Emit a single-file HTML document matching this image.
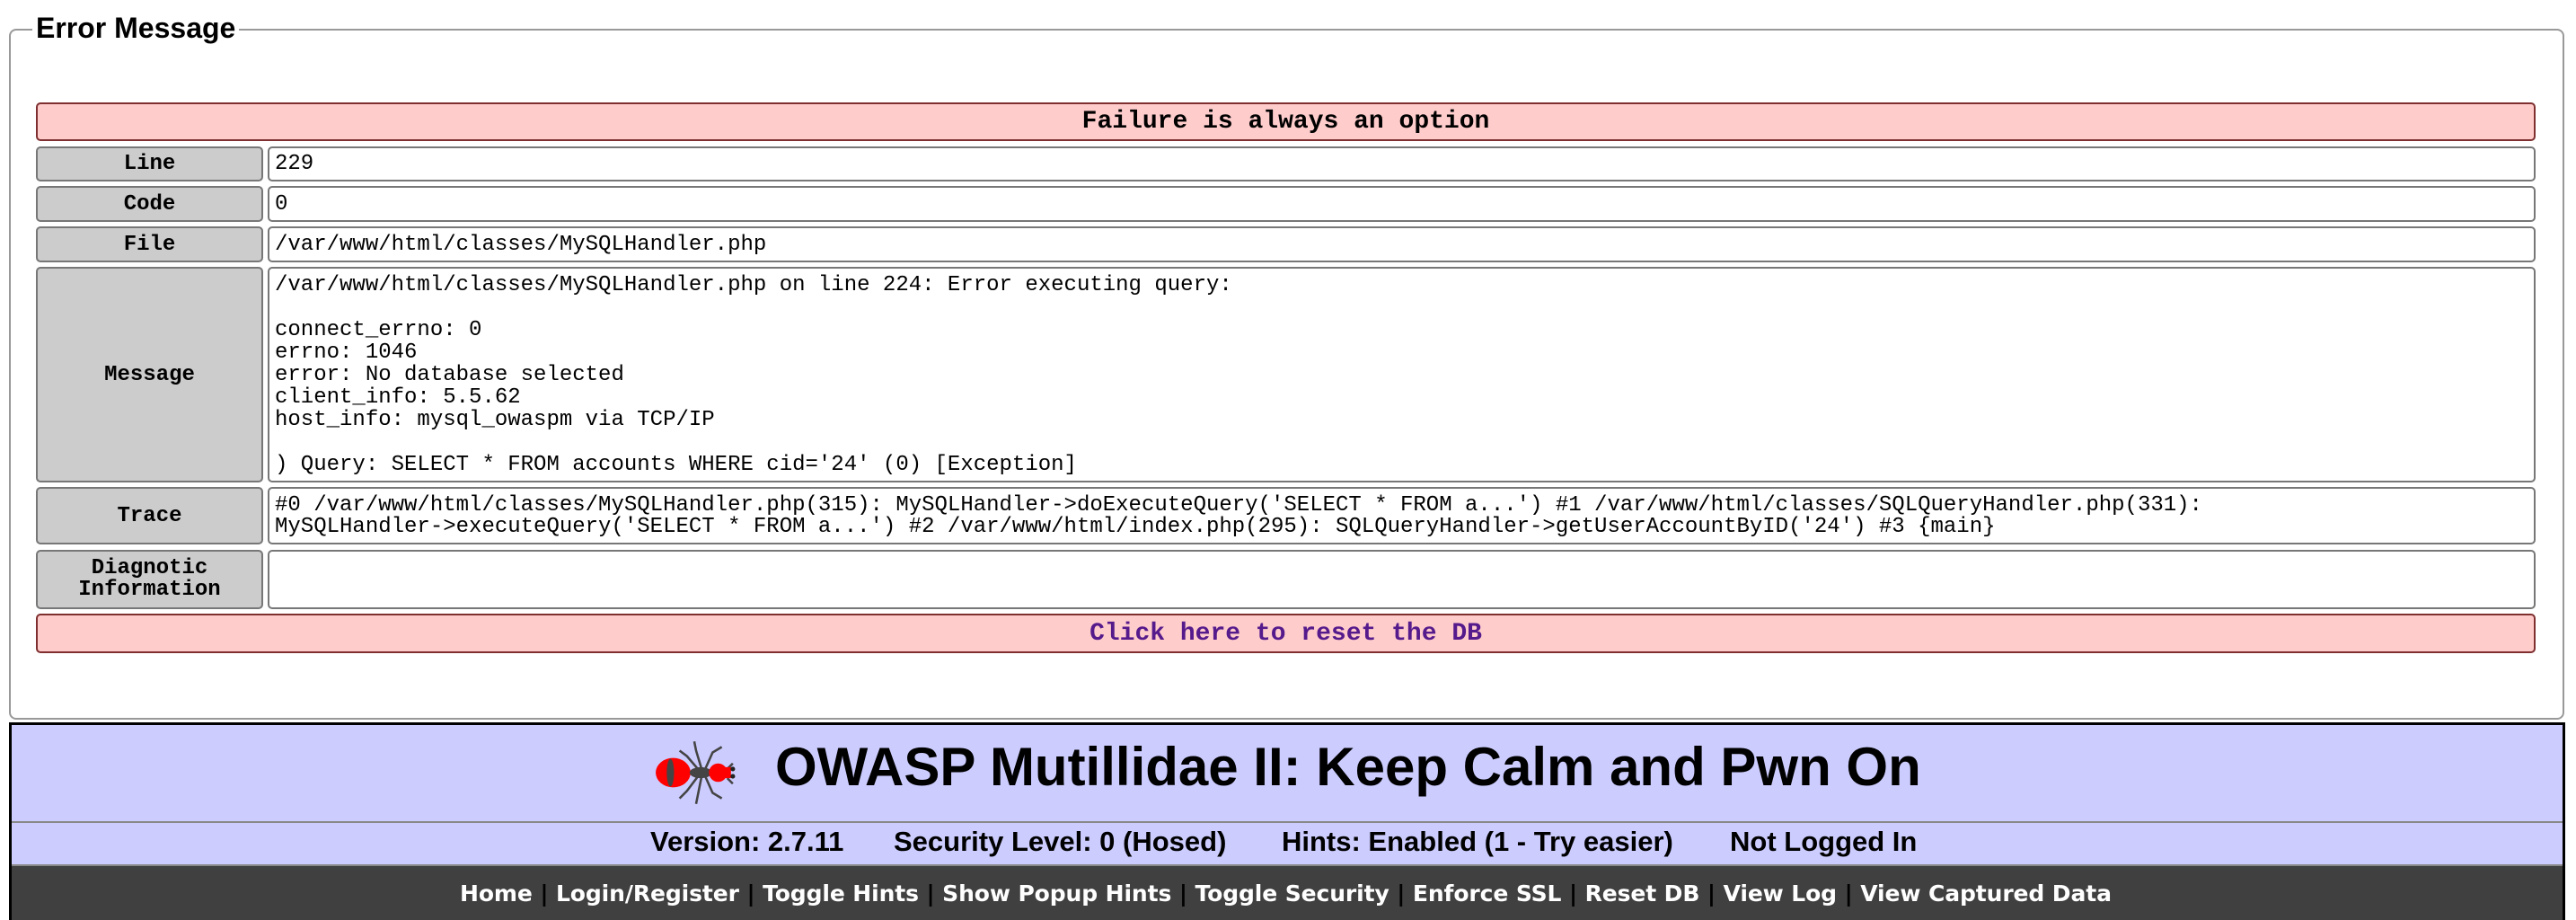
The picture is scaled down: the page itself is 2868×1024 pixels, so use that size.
<!DOCTYPE html>
<html><head><meta charset="utf-8"><style>
*{box-sizing:border-box;margin:0;padding:0}
body{width:2868px;height:1024px;background:#fff;position:relative;overflow:hidden;font-family:"Liberation Sans",sans-serif}
.a{position:absolute}
.fs{left:10px;top:32px;width:2845px;height:769px;border:2px solid #999;border-radius:8px}
.lg{left:36px;top:12px;background:#fff;padding:0 4px;font-weight:bold;font-size:32px;line-height:38px;color:#000}
.box{position:absolute;border:2px solid #777;border-radius:5px;font-family:"Liberation Mono",monospace;font-size:24px;line-height:25px;color:#000}
.lab{left:40px;width:253px;background:#ccc;font-weight:bold;text-align:center;display:flex;align-items:center;justify-content:center}
.val{left:298px;width:2525px;background:#fff;padding:2px 6px}
.pink{left:40px;width:2783px;background:#fcc;border-color:#7f2f2f;font-weight:bold;text-align:center;display:flex;align-items:center;justify-content:center;font-size:28px}
.val.c{display:flex;align-items:center}
.hdr{left:10px;top:804px;width:2846px;height:220px;border:3px solid #000;border-bottom:none;background:#ccf}
.nav{left:13px;top:962px;width:2840px;height:62px;background:#404040;border-top:2px solid #888}
.v{position:absolute;top:916px;font-weight:bold;font-size:31px;line-height:42px;white-space:nowrap}
</style></head><body>
<div class="a fs"></div>
<div class="a lg">Error Message</div>

<div class="box pink" style="top:114px;height:43px">Failure is always an option</div>

<div class="box lab" style="top:163px;height:39px">Line</div>
<div class="box val c" style="top:163px;height:39px">229</div>
<div class="box lab" style="top:207px;height:40px">Code</div>
<div class="box val c" style="top:207px;height:40px">0</div>
<div class="box lab" style="top:252px;height:40px">File</div>
<div class="box val c" style="top:252px;height:40px">/var/www/html/classes/MySQLHandler.php</div>
<div class="box lab" style="top:297px;height:240px">Message</div>
<div class="box val" style="top:297px;height:240px;padding-top:6px;white-space:pre">/var/www/html/classes/MySQLHandler.php on line 224: Error executing query:

connect_errno: 0
errno: 1046
error: No database selected
client_info: 5.5.62
host_info: mysql_owaspm via TCP/IP

) Query: SELECT * FROM accounts WHERE cid='24' (0) [Exception]</div>
<div class="box lab" style="top:542px;height:64px">Trace</div>
<div class="box val" style="top:542px;height:64px;padding-top:7px;white-space:pre;line-height:24px">#0 /var/www/html/classes/MySQLHandler.php(315): MySQLHandler-&gt;doExecuteQuery('SELECT * FROM a...') #1 /var/www/html/classes/SQLQueryHandler.php(331):
MySQLHandler-&gt;executeQuery('SELECT * FROM a...') #2 /var/www/html/index.php(295): SQLQueryHandler-&gt;getUserAccountByID('24') #3 {main}</div>
<div class="box lab" style="top:612px;height:66px;line-height:24px">Diagnotic<br>Information</div>
<div class="box val" style="top:612px;height:66px"></div>
<div class="box pink" style="top:683px;height:44px;color:#551a8b">Click here to reset the DB</div>

<div class="a hdr"></div>
<div class="a" style="left:13px;top:914px;width:2840px;height:2px;background:#888"></div>
<svg class="a" style="left:728px;top:820px" width="94" height="80" viewBox="0 0 92 76">
<g stroke="#444" stroke-width="2.5" fill="none">
<path d="M48 34 L36 20 L28 14"/><path d="M52 34 L46 14 L44 4"/><path d="M56 34 L64 16 L74 10"/>
<path d="M48 42 L36 58 L28 66"/><path d="M52 42 L48 62 L46 72"/><path d="M56 42 L64 60 L74 66"/>
<path d="M80 34 L86 28"/><path d="M80 44 L86 50"/>
</g>
<ellipse cx="21" cy="38" rx="19" ry="16" fill="#f00"/>
<ellipse cx="18" cy="38" rx="4" ry="15" fill="#444"/>
<ellipse cx="51" cy="38" rx="12" ry="6" fill="#444"/>
<ellipse cx="70" cy="38" rx="10" ry="10" fill="#f00"/>
<rect x="78" y="32" width="6" height="12" fill="#f00"/>
<circle cx="86" cy="34" r="2.5" fill="#222"/><circle cx="86" cy="42" r="2.5" fill="#222"/>
</svg>
<div class="a" style="left:863px;top:818px;font-weight:bold;font-size:60px;line-height:72px;white-space:nowrap">OWASP Mutillidae II: Keep Calm and Pwn On</div>
<div class="v" style="left:724px">Version: 2.7.11</div>
<div class="v" style="left:995px">Security Level: 0 (Hosed)</div>
<div class="v" style="left:1427px">Hints: Enabled (1 - Try easier)</div>
<div class="v" style="left:1926px">Not Logged In</div>
<div class="a nav"></div>
<div class="a" style="left:512px;top:977px;font-family:'DejaVu Sans',sans-serif;font-weight:bold;font-size:25px;line-height:36px;color:#fff;white-space:pre;letter-spacing:-0.1px">Home <span style="color:#000">|</span> Login/Register <span style="color:#000">|</span> Toggle Hints <span style="color:#000">|</span> Show Popup Hints <span style="color:#000">|</span> Toggle Security <span style="color:#000">|</span> Enforce SSL <span style="color:#000">|</span> Reset DB <span style="color:#000">|</span> View Log <span style="color:#000">|</span> View Captured Data</div>
</body></html>
